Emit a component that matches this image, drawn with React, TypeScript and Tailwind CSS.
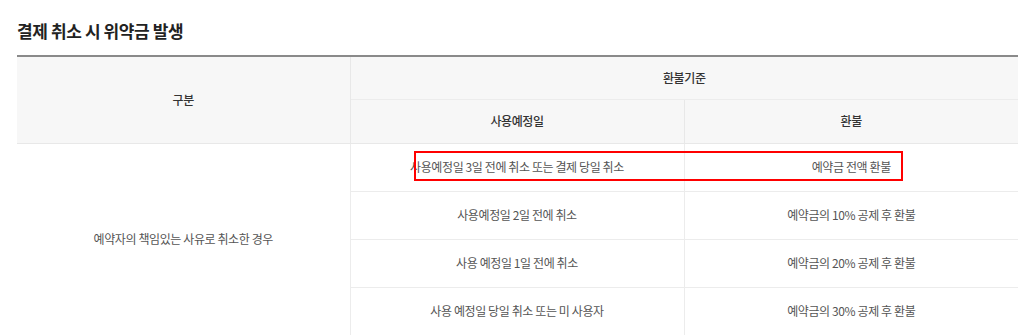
const rows = [
  { date: '사용예정일 3일 전에 취소 또는 결제 당일 취소', refund: '예약금 전액 환불' },
  { date: '사용예정일 2일 전에 취소', refund: '예약금의 10% 공제 후 환불' },
  { date: '사용 예정일 1일 전에 취소', refund: '예약금의 20% 공제 후 환불' },
  { date: '사용 예정일 당일 취소 또는 미 사용자', refund: '예약금의 30% 공제 후 환불' },
]

export default function App() {
  return (
    <div className="w-[1024px] h-[335px] overflow-hidden bg-white px-[17px] pt-[19px] font-['Noto_Sans_CJK_KR',sans-serif]">
      <h2 className="text-[17px] leading-[24px] font-bold text-[#222] tracking-[-0.4px]">결제 취소 시 위약금 발생</h2>

      {/* Refund table */}
      <div className="relative mt-[12px] w-[1001px]">
        <table className="w-full table-fixed border-collapse border-t-2 border-[#8a8a8a] text-[12px] tracking-[-0.4px] text-[#555]">
          <colgroup>
            <col className="w-[333px]" />
            <col className="w-[334px]" />
            <col className="w-[334px]" />
          </colgroup>
          <thead className="bg-[#f7f7f7] text-[#333]">
            <tr className="h-[43px]">
              <th rowSpan={2} className="border-r border-b border-[#e8e8e8] font-medium">구분</th>
              <th colSpan={2} className="border-b border-[#ececec] font-medium">환불기준</th>
            </tr>
            <tr className="h-[44px]">
              <th className="border-r border-b border-[#e8e8e8] font-medium">사용예정일</th>
              <th className="border-b border-[#e8e8e8] font-medium">환불</th>
            </tr>
          </thead>
          <tbody>
            {rows.map((r, i) => (
              <tr key={i} className="h-[48px]">
                {i === 0 && (
                  <td rowSpan={4} className="border-r border-b border-[#ececec] text-center">
                    예약자의 책임있는 사유로 취소한 경우
                  </td>
                )}
                <td className="border-r border-b border-[#ececec] text-center">{r.date}</td>
                <td className="border-b border-[#ececec] text-center">{r.refund}</td>
              </tr>
            ))}
          </tbody>
        </table>

        {/* highlight box */}
        <div className="absolute left-[397px] top-[96px] w-[489px] h-[30px] border-2 border-[#f00]" />
      </div>
    </div>
  )
}
